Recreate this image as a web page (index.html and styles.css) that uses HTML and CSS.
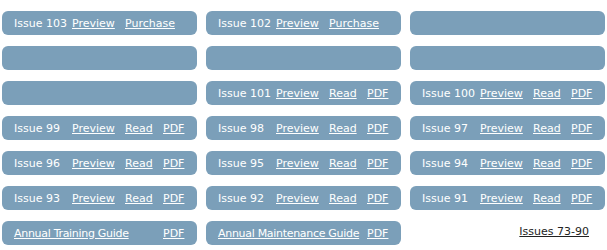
FILE: index.html
```html
<!DOCTYPE html>
<html lang="en">
<head>
    <meta charset="UTF-8">
    <title>Back Issues</title>
    <link rel="stylesheet" href="styles.css">
</head>
<body>

<div class="issues">
    <!-- Row 1 -->
    <div class="issue">
        <span>Issue 103</span>
        <a href="#">Preview</a>
        <a href="#" class="wide">Purchase</a>
    </div>
    <div class="issue">
        <span>Issue 102</span>
        <a href="#">Preview</a>
        <a href="#" class="wide">Purchase</a>
    </div>
    <div class="issue"></div>

    <!-- Row 2 -->
    <div class="issue"></div>
    <div class="issue"></div>
    <div class="issue"></div>

    <!-- Row 3 -->
    <div class="issue"></div>
    <div class="issue">
        <span>Issue 101</span>
        <a href="#">Preview</a>
        <a href="#">Read</a>
        <a href="#">PDF</a>
    </div>
    <div class="issue">
        <span>Issue 100</span>
        <a href="#">Preview</a>
        <a href="#">Read</a>
        <a href="#">PDF</a>
    </div>

    <!-- Row 4 -->
    <div class="issue">
        <span>Issue 99</span>
        <a href="#">Preview</a>
        <a href="#">Read</a>
        <a href="#">PDF</a>
    </div>
    <div class="issue">
        <span>Issue 98</span>
        <a href="#">Preview</a>
        <a href="#">Read</a>
        <a href="#">PDF</a>
    </div>
    <div class="issue">
        <span>Issue 97</span>
        <a href="#">Preview</a>
        <a href="#">Read</a>
        <a href="#">PDF</a>
    </div>

    <!-- Row 5 -->
    <div class="issue">
        <span>Issue 96</span>
        <a href="#">Preview</a>
        <a href="#">Read</a>
        <a href="#">PDF</a>
    </div>
    <div class="issue">
        <span>Issue 95</span>
        <a href="#">Preview</a>
        <a href="#">Read</a>
        <a href="#">PDF</a>
    </div>
    <div class="issue">
        <span>Issue 94</span>
        <a href="#">Preview</a>
        <a href="#">Read</a>
        <a href="#">PDF</a>
    </div>

    <!-- Row 6 -->
    <div class="issue">
        <span>Issue 93</span>
        <a href="#">Preview</a>
        <a href="#">Read</a>
        <a href="#">PDF</a>
    </div>
    <div class="issue">
        <span>Issue 92</span>
        <a href="#">Preview</a>
        <a href="#">Read</a>
        <a href="#">PDF</a>
    </div>
    <div class="issue">
        <span>Issue 91</span>
        <a href="#">Preview</a>
        <a href="#">Read</a>
        <a href="#">PDF</a>
    </div>

    <!-- Guides -->
    <div class="issue">
        <a href="#" class="guide">Annual Training Guide</a>
        <a href="#">PDF</a>
    </div>
    <div class="issue">
        <a href="#" class="guide">Annual Maintenance Guide</a>
        <a href="#">PDF</a>
    </div>
    <div class="older">
        <a href="#">Issues 73-90</a>
    </div>
</div>

</body>
</html>
```

FILE: styles.css
```css
/* Global */
* {
    margin: 0;
    padding: 0;
    box-sizing: border-box;
}

body {
    background: #fff;
    font-family: "DejaVu Sans", Verdana, sans-serif;
    font-size: 11px;
}

/* Issue grid */
.issues {
    display: grid;
    grid-template-columns: repeat(3, 195px);
    grid-auto-rows: 24px;
    column-gap: 9px;
    row-gap: 11px;
    padding: 11px 0 0 2px;
}

.issue {
    display: grid;
    grid-template-columns: 58px 53px 38px auto;
    align-items: center;
    padding-left: 12px;
    background-color: #7b9fb9;
    border-radius: 6px;
    color: #fff;
    white-space: nowrap;
}

.issue a {
    color: #fff;
}

.issue .wide {
    grid-column: 3 / span 2;
}

.issue .guide {
    grid-column: 1 / span 3;
    letter-spacing: -0.3px;
}

/* Link to older issues */
.older {
    display: flex;
    align-items: flex-end;
    justify-content: flex-end;
    padding: 0 16px 7px 0;
}

.older a {
    color: #222;
}
```
